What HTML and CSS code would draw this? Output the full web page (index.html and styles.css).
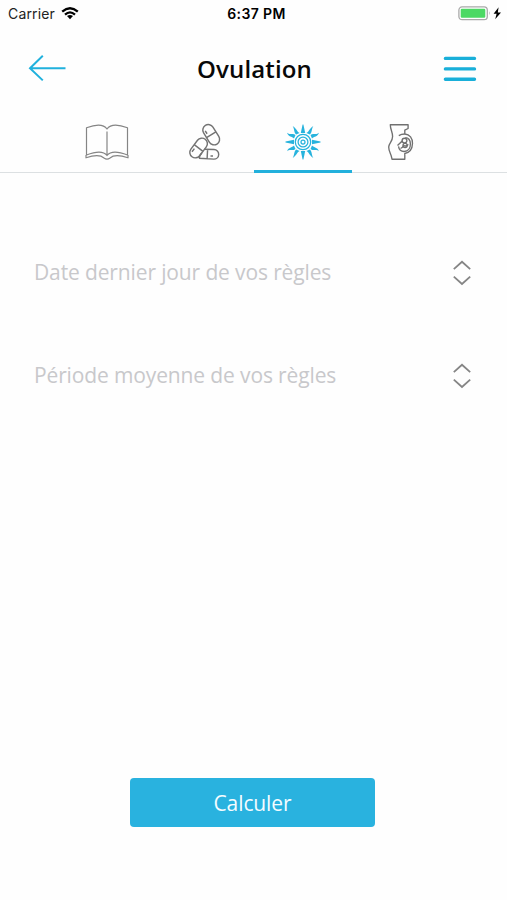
FILE: index.html
```html
<!DOCTYPE html>
<html lang="fr">
<head>
<meta charset="utf-8">
<title>Ovulation</title>
<link rel="stylesheet" href="styles.css">
</head>
<body>
<div class="screen">
  <div class="status">
    <div class="carrier"><span>Carrier</span>
      <svg width="18" height="14" viewBox="0 0 18 14" fill="none" stroke="#000" stroke-width="2.3"><path d="M1.2 4.6Q9-2.1 16.8 4.6M4 7.6Q9 3.1 14 7.6"/><path d="M6 9.1Q9 6.7 12 9.1L9 12.3Z" fill="#000" stroke="none"/></svg>
    </div>
    <div class="time">6:37 PM</div>
    <div class="power">
      <svg width="44" height="16" viewBox="0 0 44 16"><rect x=".9" y=".9" width="28.4" height="12.8" rx="3.2" fill="#fff" stroke="#a9a9a9" stroke-width="1.3"/><rect x="2.7" y="2.8" width="24.6" height="8.9" rx="1.2" fill="#4cd964"/><path d="M31 5.3q1.5 2 0 4z" fill="#a9a9a9"/><path d="M40.6 1.3L35.6 7.8h3L37.2 13.3 43 6.5h-3.2z" fill="#000"/></svg>
    </div>
  </div>
  <header class="header">
    <svg class="back" width="38" height="28" viewBox="0 0 38 28" fill="none" stroke="#20b1dd" stroke-width="2"><path d="M14.8 1.8L2 14.2 14.8 26.4M2 14.2H37.5"/></svg>
    <h1>Ovulation</h1>
    <svg class="menu" width="34" height="28" viewBox="0 0 34 28" stroke="#19afd9" stroke-width="3.4" stroke-linecap="round"><path d="M2.4 4.4H31.5M2.4 14.9H31.5M2.4 25.3H31.5"/></svg>
  </header>
  <nav class="tabs">
    <a class="tab"><svg width="44" height="38" viewBox="0 0 44 38" fill="none" stroke="#858585" stroke-width="1.2" stroke-linejoin="round"><path d="M22 6Q17-1 1.5 4.8V32Q17 26 22 32.5Q27 26 42.5 32V4.8Q27-1 22 6ZM22 8.5V32.5"/><path d="M1 32v2.8Q14 30.5 19 35Q22 37.2 25 35Q30 30.5 43 34.8V32"/></svg></a>
    <a class="tab"><svg width="38" height="40" viewBox="0 0 38 40" fill="none" stroke="#737373" stroke-width="1.45"><g transform="translate(25.2 12.7) rotate(-32)"><rect x="-5.5" y="-11" width="11" height="22" rx="5.5"/><path d="M-5.5 0h11M-3-3V-6.5"/></g><g transform="translate(12.6 26) rotate(37)"><rect x="-5.5" y="-11" width="11" height="22" rx="5.5" fill="#fefefe"/><path d="M-5.5 0h11M-3 7V3"/></g><path d="M18.3 27.2L28 27.5A4.8 4.8 0 0 1 27.8 37.1L13.5 36.2Q13 33.6 15.9 30.9M21.6 27.3L21.1 36.7M24.5 34H27"/></svg></a>
    <a class="tab active"><svg width="36" height="38" viewBox="-18 -19 36 38" fill="none" stroke="#27b3dd" stroke-width="1.25">
      <defs>
        <path id="ray" d="M-2.2-9L-.4-17.5H.4L2.2-9Z" fill="#27b3dd" stroke="none"/>
        <g id="curls" fill="#27b3dd" stroke="none"><path d="M3.4-9C5.8-10 5.9-13 10.4-16C8.3-13 9.5-10.3 6.9-7.5Z"/><path d="M7.5-6.9C10.3-9.5 13-6.6 16-9.2C14.2-4.6 11.3-6 9-3.4Z"/></g>
      </defs>
      <circle r="7.7"/><circle r="4.9"/><circle r="2"/>
      <use href="#ray"/><use href="#ray" transform="rotate(90)"/><use href="#ray" transform="rotate(180)"/><use href="#ray" transform="rotate(270)"/>
      <use href="#curls"/><use href="#curls" transform="scale(-1 1)"/><use href="#curls" transform="scale(1 -1)"/><use href="#curls" transform="scale(-1 -1)"/>
    </svg></a>
    <a class="tab"><svg width="28" height="38" viewBox="0.7 0 28 38" fill="none" stroke="#707070" stroke-width="1.35" stroke-linejoin="round"><path d="M4 1.7H21.8V5.5L18.5 7.2V11C23.5 11.2 26.3 15.5 26.2 20.5C26 26.5 23.8 29.5 18.5 30.5V36.2H5.7C5 30.5 2.5 29.5 2.4 24C2.4 20.2 6.3 18.5 6.3 13.5C6.3 9 4 6.5 4 1.7Z"/><path d="M12.5 12.6Q15 11 18.5 11M12.2 23.4Q13 28.5 17.8 28.5C22 28.4 24.2 25 24.1 20.8C24 17 22 14.6 19 14.7M11.2 22.5Q15.2 18.5 16.5 17.6M14.2 25.5Q16.5 24.5 17.5 22.5Q20 24 22 21.3"/><circle cx="18.2" cy="17.6" r="2.4"/><circle cx="18.8" cy="22.4" r="2.1"/></svg></a>
  </nav>
  <main class="form">
    <div class="field"><span>Date dernier jour de vos règles</span><svg width="18" height="26" viewBox="0 0 18 26" fill="none" stroke="#858585" stroke-width="1.8"><path d="M.8 9.2L9 1.8 17.2 9.2M.8 16.6L9 24 17.2 16.6"/></svg></div>
    <div class="field"><span>Période moyenne de vos règles</span><svg width="18" height="26" viewBox="0 0 18 26" fill="none" stroke="#858585" stroke-width="1.8"><path d="M.8 9.2L9 1.8 17.2 9.2M.8 16.6L9 24 17.2 16.6"/></svg></div>
  </main>
  <button class="submit" type="button">Calculer</button>
</div>
</body>
</html>
```
FILE: styles.css
```css
* { box-sizing: border-box; }
body { margin: 0; background: #fefefe; }
svg { display: block; }
.screen {
  width: 507px;
  height: 900px;
  display: flex;
  flex-direction: column;
  background: #fefefe;
  font-family: "Open Sans", sans-serif;
  overflow: hidden;
}
.status {
  height: 28px;
  display: grid;
  grid-template-columns: 1fr 80px 1fr;
  align-items: center;
  padding: 0 5px 1px 8px;
  font-family: Inter, sans-serif;
  font-size: 14px;
  line-height: 18px;
  color: #222;
}
.carrier { display: flex; align-items: center; gap: 6px; letter-spacing: .15px; }
.time { font-weight: 600; text-align: center; color: #000; white-space: nowrap; letter-spacing: .4px; padding-left: 3px; }
.power { justify-self: end; }
.header {
  height: 82px;
  display: grid;
  grid-template-columns: 38px 1fr 34px;
  align-items: center;
  padding: 0 30px 2px 28px;
}
.header h1 {
  margin: 0;
  text-align: center;
  font-size: 24px;
  line-height: 34px;
  font-weight: 600;
  letter-spacing: .15px;
  padding-top: 1px;
  color: #080808;
}
.tabs {
  height: 63px;
  display: flex;
  justify-content: center;
  border-bottom: 1px solid #dce0e2;
}
.tab {
  width: 98px;
  height: 63px;
  display: flex;
  align-items: center;
  justify-content: center;
  padding-top: 3px;
  border-bottom: 3px solid transparent;
}
.tab.active { border-bottom-color: #22b0dc; }
.form { height: 605px; padding: 74px 36px 0 34px; }
.field {
  height: 52px;
  margin-bottom: 51px;
  display: flex;
  align-items: center;
  justify-content: space-between;
  color: #c8c8cb;
  font-size: 21px;
  line-height: 30px;
  letter-spacing: -.13px;
}
.field span { padding-bottom: 2px; }
.submit {
  width: 245px;
  height: 49px;
  margin: 0 0 0 130px;
  padding: 0;
  border: 0;
  border-radius: 4px;
  background: #29b2df;
  color: #f4fcff;
  font: 400 21px/30px "Open Sans", sans-serif;
  letter-spacing: -.1px;
}
```
